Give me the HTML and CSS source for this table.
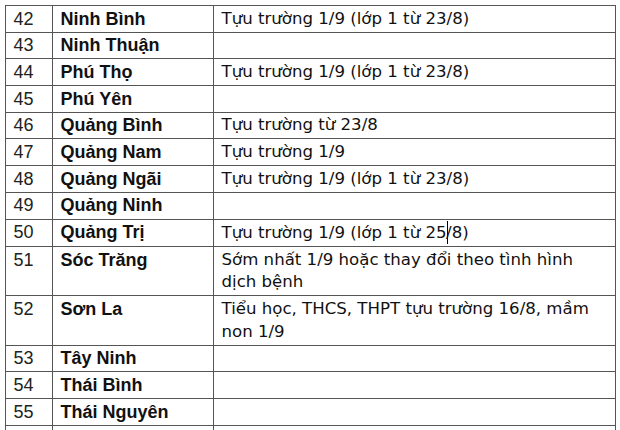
FILE: index.html
```html
<!DOCTYPE html>
<html lang="vi">
<head>
<meta charset="utf-8">
<title>Lịch tựu trường</title>
<link rel="stylesheet" href="styles.css">
</head>
<body>
<table class="sched">
  <colgroup>
    <col class="c-no">
    <col class="c-name">
    <col class="c-note">
  </colgroup>
  <tbody>
    <tr><td class="no">42</td><td class="name">Ninh Bình</td><td class="note">Tựu trường 1/9 (lớp 1 từ 23/8)</td></tr>
    <tr><td class="no">43</td><td class="name">Ninh Thuận</td><td class="note"></td></tr>
    <tr><td class="no">44</td><td class="name">Phú Thọ</td><td class="note">Tựu trường 1/9 (lớp 1 từ 23/8)</td></tr>
    <tr><td class="no">45</td><td class="name">Phú Yên</td><td class="note"></td></tr>
    <tr><td class="no">46</td><td class="name">Quảng Bình</td><td class="note">Tựu trường từ 23/8</td></tr>
    <tr><td class="no">47</td><td class="name">Quảng Nam</td><td class="note">Tựu trường 1/9</td></tr>
    <tr><td class="no">48</td><td class="name">Quảng Ngãi</td><td class="note">Tựu trường 1/9 (lớp 1 từ 23/8)</td></tr>
    <tr><td class="no">49</td><td class="name">Quảng Ninh</td><td class="note"></td></tr>
    <tr><td class="no">50</td><td class="name">Quảng Trị</td><td class="note">Tựu trường 1/9 (lớp 1 từ 25<span class="caret"></span>/8)</td></tr>
    <tr><td class="no">51</td><td class="name">Sóc Trăng</td><td class="note">Sớm nhất 1/9 hoặc thay đổi theo tình hình dịch bệnh</td></tr>
    <tr><td class="no">52</td><td class="name">Sơn La</td><td class="note">Tiểu học, THCS, THPT tựu trường 16/8, mầm non 1/9</td></tr>
    <tr><td class="no">53</td><td class="name">Tây Ninh</td><td class="note"></td></tr>
    <tr><td class="no">54</td><td class="name">Thái Bình</td><td class="note"></td></tr>
    <tr><td class="no">55</td><td class="name">Thái Nguyên</td><td class="note"></td></tr>
    <tr><td class="no"></td><td class="name"></td><td class="note"></td></tr>
  </tbody>
</table>
</body>
</html>
```
FILE: styles.css
```css
html, body {
  margin: 0;
  padding: 0;
  background: #ffffff;
}

body {
  overflow: hidden;
}

.sched {
  border-collapse: collapse;
  table-layout: fixed;
  width: 610px;
  margin: 5px 0 0 4.5px;
  color: #111;
}

.c-no { width: 47px; }
.c-name { width: 161px; }
.c-note { width: 402px; }

.sched td {
  border: 1px solid #555;
  padding: 1.5px 7px 1.6px 8px;
  line-height: 22.6px;
  height: 22.6px;
  vertical-align: top;
  white-space: normal;
}

.no {
  font-family: "Liberation Sans", Arial, sans-serif;
  font-size: 18px;
  color: #222;
}

.name {
  font-family: "Liberation Sans", Arial, sans-serif;
  font-weight: bold;
  font-size: 18px;
  color: #111;
}

.sched td.note {
  font-family: "DejaVu Sans", sans-serif;
  font-size: 16.6px;
  color: #111;
  padding-right: 20px;
}

.caret {
  display: inline-block;
  width: 0;
  height: 23px;
  border-left: 1.5px solid #000;
  margin-right: -1.5px;
  vertical-align: -6px;
}
```
